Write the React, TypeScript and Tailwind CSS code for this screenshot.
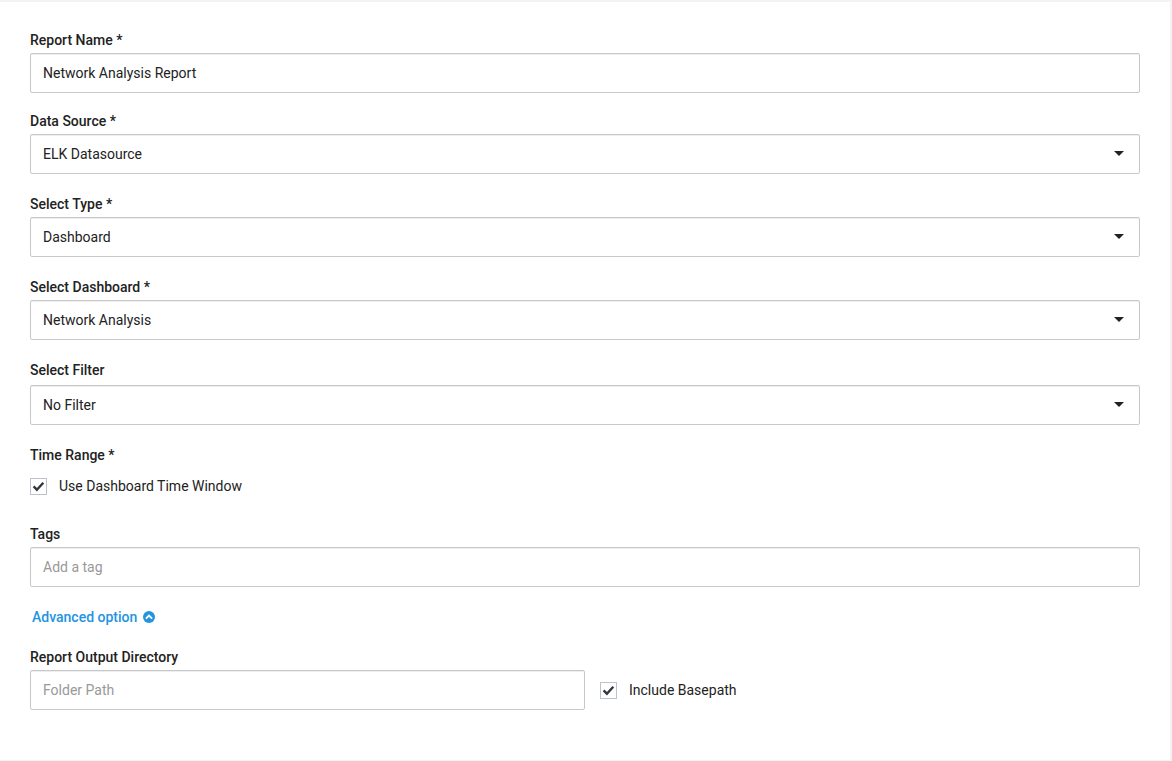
import { useState } from "react";
import type { ReactNode } from "react";

const fieldClass =
    "h-10 w-full rounded-xs border border-[#c8c8c8] bg-white px-3 text-sm text-[#222] shadow-[inset_0_1px_1px_rgba(0,0,0,0.075)] outline-none placeholder:text-[#999] focus:border-[#2394df]";

interface FieldProps {
    id: string;
    label: string;
    className?: string;
    children: ReactNode;
}

function Field({ id, label, className = "gap-[3px]", children }: FieldProps) {
    return (
        <div className={`flex flex-col ${className}`}>
            <label htmlFor={id} className="text-sm leading-5 font-medium">
                {label}
            </label>
            {children}
        </div>
    );
}

interface SelectBoxProps {
    id: string;
    options: string[];
}

function SelectBox({ id, options }: SelectBoxProps) {
    return (
        <div className="relative">
            <select id={id} className={`${fieldClass} appearance-none`}>
                {options.map((option) => (
                    <option key={option}>{option}</option>
                ))}
            </select>
            <svg
                viewBox="0 0 10 5"
                className="pointer-events-none absolute top-[17px] right-4 h-[5px] w-[10px] fill-[#222]"
                aria-hidden="true"
            >
                <path d="M0 0h10L5 5z" />
            </svg>
        </div>
    );
}

interface CheckProps {
    label: string;
    checked: boolean;
    onChange: (checked: boolean) => void;
}

function Check({ label, checked, onChange }: CheckProps) {
    return (
        <label className="flex items-center gap-3 text-sm leading-5">
            <span className="grid size-[17px] shrink-0 place-items-center">
                <input
                    type="checkbox"
                    checked={checked}
                    onChange={(e) => onChange(e.target.checked)}
                    className="col-start-1 row-start-1 size-[17px] appearance-none border border-[#bcc3cc] bg-white"
                />
                {checked && (
                    <svg
                        viewBox="0 0 17 17"
                        className="pointer-events-none z-10 col-start-1 row-start-1 size-[17px] fill-none stroke-[#34373c]"
                        strokeWidth="2.4"
                        aria-hidden="true"
                    >
                        <path d="M3.6 8.4l3.3 3.3 6.4-6.9" />
                    </svg>
                )}
            </span>
            {label}
        </label>
    );
}

export default function App() {
    const [useWindow, setUseWindow] = useState(true);
    const [basepath, setBasepath] = useState(true);
    const [advanced, setAdvanced] = useState(true);

    return (
        <form className="min-h-screen border-t-2 border-r-2 border-b border-[#f3f3f3] bg-white px-[30px] pt-7 pb-[50px] font-[Roboto,sans-serif] text-[#222]">
            <Field id="name" label="Report Name *">
                <input id="name" type="text" defaultValue="Network Analysis Report" className={fieldClass} />
            </Field>

            <div className="mt-[18px] flex flex-col gap-5">
                <Field id="source" label="Data Source *">
                    <SelectBox id="source" options={["ELK Datasource"]} />
                </Field>
                <Field id="type" label="Select Type *">
                    <SelectBox id="type" options={["Dashboard"]} />
                </Field>
                <Field id="dashboard" label="Select Dashboard *">
                    <SelectBox id="dashboard" options={["Network Analysis"]} />
                </Field>
                <Field id="filter" label="Select Filter" className="gap-[5px]">
                    <SelectBox id="filter" options={["No Filter"]} />
                </Field>

                <fieldset className="mb-2">
                    <legend className="mb-[11px] text-sm leading-5 font-medium">Time Range *</legend>
                    <Check label="Use Dashboard Time Window" checked={useWindow} onChange={setUseWindow} />
                </fieldset>

                <Field id="tags" label="Tags">
                    <input id="tags" type="text" placeholder="Add a tag" className={fieldClass} />
                </Field>

                <button
                    type="button"
                    onClick={() => setAdvanced(!advanced)}
                    className="ml-0.5 flex items-center gap-1.5 self-start text-sm leading-5 font-medium text-[#2394df]"
                >
                    Advanced option
                    <svg
                        viewBox="0 0 12 12"
                        className={`size-3 ${advanced ? "" : "rotate-180"}`}
                        aria-hidden="true"
                    >
                        <circle cx="6" cy="6" r="6" fill="currentColor" />
                        <path d="M2.9 7.6L6 4.5l3.1 3.1" fill="none" stroke="#fff" strokeWidth="1.8" />
                    </svg>
                </button>

                {advanced && (
                    <div className="flex items-end gap-[15px]">
                        <Field id="folder" label="Report Output Directory" className="w-1/2 gap-[3px]">
                            <input id="folder" type="text" placeholder="Folder Path" className={fieldClass} />
                        </Field>
                        <div className="pb-[10px]">
                            <Check label="Include Basepath" checked={basepath} onChange={setBasepath} />
                        </div>
                    </div>
                )}
            </div>
        </form>
    );
}
